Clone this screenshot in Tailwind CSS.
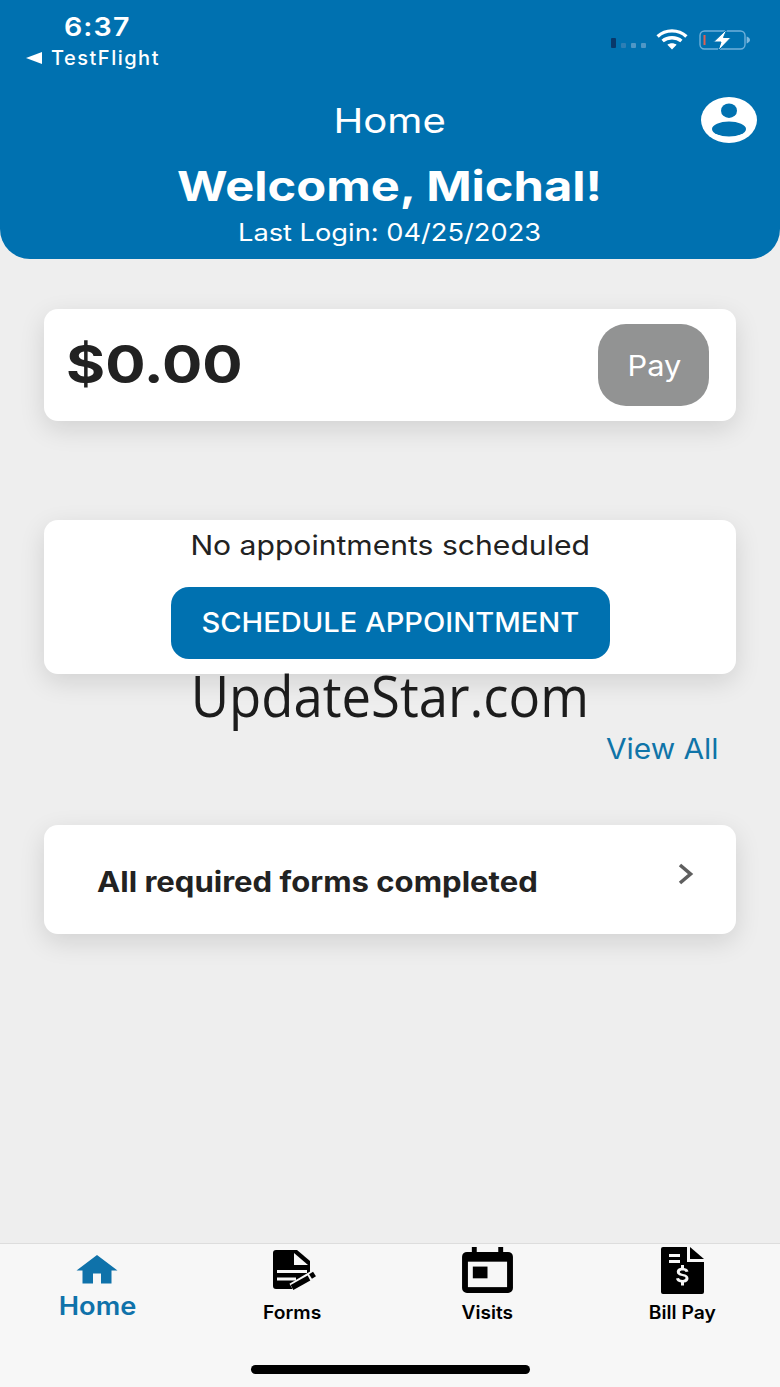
<!DOCTYPE html>
<html>
<head>
<meta charset="utf-8">
<script src="https://cdn.jsdelivr.net/npm/@tailwindcss/browser@4"></script>
</head>
<body class="m-0">
<div class="w-[780px] h-[1387px] bg-[#eeeeee] flex flex-col overflow-hidden font-['Inter','Liberation_Sans',sans-serif]">
  <header class="h-[259px] shrink-0 bg-[#0071b0] rounded-b-[30px] text-white flex flex-col relative">
    <div class="h-[76px] flex justify-between shrink-0">
      <div class="pl-[26px] pt-[11px] flex flex-col">
        <div class="text-[26px] leading-[31px] font-semibold text-center w-[143px] tracking-[1px]"><span class="inline-block scale-x-[1.1]">6:37</span></div>
        <div class="flex items-center gap-[9px] h-[30px] mt-[1px]">
          <svg width="16" height="12" viewBox="0 0 16 12"><path d="M16 0v12L0 6z" fill="#fff"/></svg>
          <span class="text-[20px] leading-[30px] font-medium tracking-[1.5px]">TestFlight</span>
        </div>
      </div>
      <div class="flex items-start pr-[30px] pt-[29px]">
        <div class="flex items-end gap-[5px] mt-[9px] mr-[10px]">
          <span class="w-[5px] h-[10px] rounded-[1px] bg-[#08386b]"></span>
          <span class="w-[5px] h-[5px] rounded-[1px] bg-[#2d7fb5]"></span>
          <span class="w-[5px] h-[5px] rounded-[1px] bg-[#4f97c6]"></span>
          <span class="w-[5px] h-[5px] rounded-[1px] bg-[#4f97c6]"></span>
        </div>
        <svg width="32" height="21" viewBox="0 0 32 21" fill="none" stroke="#fff" stroke-width="3.4" class="mr-[11px]">
          <path d="M1.600 7.400C9.600 0 22.400 0 30.400 7.400"/>
          <path d="M6.600 12C11.700 7.600 20.300 7.600 25.400 12"/>
          <path d="M16 20.500l-4.600-4.700c2.600-2 6.600-2 9.200 0z" fill="#fff" stroke="none"/>
        </svg>
        <svg width="51" height="22" viewBox="0 0 51 22" fill="none">
          <rect x="1" y="2" width="45" height="18" rx="4.500" stroke="#6fb0da" stroke-width="1.400"/>
          <rect x="4.500" y="6" width="2" height="10" fill="#e2604f"/>
          <path d="M47.600 7.500c1.600.6 3.400 1.900 3.400 3.500s-1.800 2.900-3.400 3.500z" fill="#7db8de"/>
          <path d="M28 0L14.500 13h7.500L19 22 32 8.500h-7.500z" fill="#fff" stroke="#0071b0" stroke-width="1"/>
        </svg>
      </div>
    </div>
    <div class="absolute right-[23px] top-[97px]">
      <svg width="56" height="46" viewBox="0 0 56 46">
        <ellipse cx="28" cy="23" rx="28" ry="23" fill="#fff"/>
        <ellipse cx="28" cy="13.700" rx="8" ry="7.200" fill="#0071b0"/>
        <ellipse cx="28" cy="32" rx="17" ry="7.500" fill="#0071b0"/>
      </svg>
    </div>
    <div class="text-center text-[34px] leading-[40px] mt-[25px]"><span class="inline-block scale-x-[1.18]">Home</span></div>
    <div class="text-center text-[41px] leading-[50px] font-bold mt-[20px]"><span class="inline-block scale-x-[1.19]">Welcome, Michal!</span></div>
    <div class="text-center text-[24px] leading-[30px] mt-[7px]"><span class="inline-block scale-x-[1.135]">Last Login: 04/25/2023</span></div>
  </header>

  <main class="flex-1 px-[44px] flex flex-col">
    <section class="mt-[50px] h-[112px] bg-white rounded-[14px] shadow-[0_8px_26px_rgba(0,0,0,0.12)] flex items-center justify-between pl-[23px] pr-[27px]">
      <div class="text-[52px] leading-[60px] font-bold text-[#222222] mt-[-1px] ml-[-1px]"><span class="inline-block origin-left scale-x-[1.15]">$0.00</span></div>
      <div class="w-[111px] h-[82px] rounded-[28px] bg-[#929393] text-white text-[28px] flex items-center justify-center"><span class="inline-block scale-x-[1.1] mt-[2px] ml-[2px]">Pay</span></div>
    </section>

    <section class="mt-[99px] h-[154px] bg-white rounded-[14px] shadow-[0_8px_26px_rgba(0,0,0,0.12)] flex flex-col items-center">
      <div class="text-[27px] leading-[34px] text-[#222222] mt-[9px]"><span class="inline-block scale-x-[1.115]">No appointments scheduled</span></div>
      <div class="mt-[24px] w-[439px] h-[72px] rounded-[18px] bg-[#0071b0] text-white text-[27px] font-medium flex items-center justify-center"><span class="inline-block scale-x-[1.077] mt-[1px]">SCHEDULE APPOINTMENT</span></div>
    </section>

    <div class="text-center text-[56px] leading-[48px] text-[#1c1c1c] font-['Open_Sans',sans-serif] mt-[-3px]"><span class="inline-block scale-x-[0.94]">UpdateStar.com</span></div>
    <div class="text-right text-[28px] leading-[34px] text-[#0f74a8] pr-[17px] mt-[13px]"><span class="inline-block origin-right scale-x-[1.067]">View All</span></div>

    <section class="mt-[59px] h-[109px] bg-white rounded-[14px] shadow-[0_8px_26px_rgba(0,0,0,0.12)] flex items-center justify-between pl-[53px] pr-[41px]">
      <div class="text-[28px] leading-[34px] font-bold text-[#222222] mt-[5px]"><span class="inline-block origin-left scale-x-[1.11]">All required forms completed</span></div>
      <svg width="18" height="22" viewBox="0 0 18 22" fill="none" class="mt-[-12px]"><path d="M3 2l10.500 9L3 20" stroke="#5f5f5f" stroke-width="3.600"/></svg>
    </section>
  </main>

  <footer class="h-[144px] shrink-0 bg-[#f7f7f7] border-t border-[#dddddd] relative grid grid-cols-4">
    <div class="flex flex-col items-center text-[#0f72aa]">
      <svg width="42" height="30" viewBox="0 0 42 30" class="mt-[10px] ml-[-1px]"><path d="M21 1L0.500 16.500H6.500V29.500H17V19.500H25V29.500H35.500V16.500H41.500z" fill="#0f72aa"/></svg>
      <div class="text-[25px] leading-[30px] font-semibold mt-[7px]"><span class="inline-block scale-x-[1.09]">Home</span></div>
    </div>
    <div class="flex flex-col items-center text-black">
      <svg width="44" height="42" viewBox="0 0 44 42" class="mt-[5px] ml-[3px]">
        <path d="M4 1H25L38 12V36a4 4 0 0 1-4 4H4a3 3 0 0 1-3-3V4a3 3 0 0 1 3-3z" fill="#000"/>
        <path d="M22 4L36 16H22z" fill="#f7f7f7"/>
        <path d="M5 21h30v3H5zM5 28.500h19v3H5z" fill="#f7f7f7"/>
        <path d="M17 42L44 26V42z" fill="#f7f7f7"/>
        <path d="M20 39L42 26" stroke="#f7f7f7" stroke-width="10"/>
        <path d="M20 38.500L37 29" stroke="#000" stroke-width="5.500"/>
        <path d="M38.500 27.500L42.500 25" stroke="#000" stroke-width="5.500"/>
      </svg>
      <div class="text-[18px] leading-[24px] font-semibold mt-[10px]"><span class="inline-block scale-x-[1.07]">Forms</span></div>
    </div>
    <div class="flex flex-col items-center text-black">
      <svg width="51" height="46" viewBox="0 0 52 47" class="mt-[3px] ml-[-1px]">
        <path d="M10 0h5v5h22V0h5v5h5a5 5 0 0 1 5 5v32a5 5 0 0 1-5 5H5a5 5 0 0 1-5-5V10a5 5 0 0 1 5-5h5z" fill="#000"/>
        <rect x="6" y="15" width="40" height="26" fill="#f7f7f7"/>
        <rect x="11" y="20" width="15" height="12" fill="#000"/>
      </svg>
      <div class="text-[18px] leading-[24px] font-semibold mt-[8px]"><span class="inline-block scale-x-[1.06]">Visits</span></div>
    </div>
    <div class="flex flex-col items-center text-black">
      <svg width="43" height="47" viewBox="0 0 43 47" class="mt-[3px]">
        <path d="M2 0h24v15h17v30a2 2 0 0 1-2 2H2a2 2 0 0 1-2-2V2a2 2 0 0 1 2-2z" fill="#000"/>
        <path d="M29 0l14 12H29z" fill="#000"/>
        <path d="M8 7h11v3H8zM8 13h11v3H8z" fill="#f7f7f7"/>
        <path d="M20 18h3v3c2.500.3 4 1.500 4.500 3.500l-3 .6c-.3-1-1.200-1.500-3-1.500-1.700 0-2.700.6-2.700 1.500s.8 1.300 3.200 1.800c3.500.7 5.500 1.800 5.500 4.500 0 2.300-1.800 3.800-4.500 4.100v3h-3v-3c-2.800-.3-4.600-1.700-5-4l3-.6c.3 1.300 1.500 2 3.500 2 1.900 0 3-.7 3-1.800 0-1-.8-1.500-3.400-2-3.400-.7-5.300-1.800-5.300-4.300 0-2.200 1.700-3.700 4.200-4z" fill="#f7f7f7"/>
      </svg>
      <div class="text-[18px] leading-[24px] font-semibold mt-[7px]"><span class="inline-block scale-x-[1.07]">Bill Pay</span></div>
    </div>
    <div class="absolute left-[251px] top-[121px] w-[279px] h-[9px] rounded-full bg-black"></div>
  </footer>
</div>
</body>
</html>
